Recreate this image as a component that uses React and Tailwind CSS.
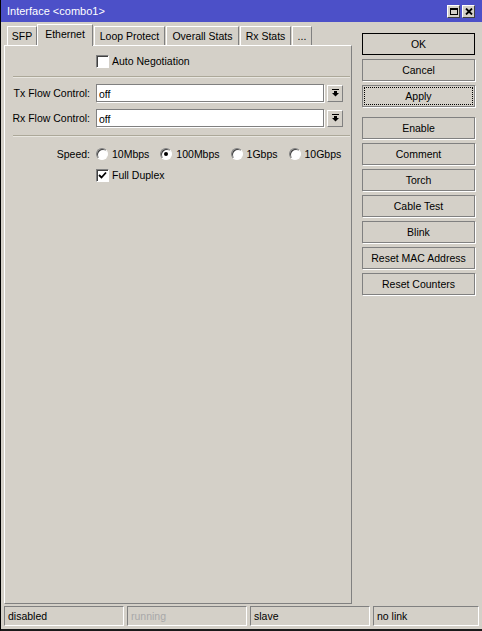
import React from 'react';

const font = { fontFamily: '"Liberation Sans", Arial, sans-serif' };

function Check({ checked }) {
  return (
    <div className="w-[13px] h-[13px] bg-white border border-[#808080] border-r-white border-b-white shadow-[inset_1px_1px_0_#404040] flex items-center justify-center">
      {checked && (
        <svg width="9" height="9" viewBox="0 0 9 9">
          <path d="M1 4 L3.5 6.5 L8 1.5" fill="none" stroke="#000" strokeWidth="1.8" />
        </svg>
      )}
    </div>
  );
}

function Radio({ checked }) {
  return (
    <div className="w-[12px] h-[12px] rounded-full bg-white border border-[#808080] border-r-white border-b-white shadow-[inset_1px_1px_0_#404040] flex items-center justify-center">
      {checked && <div className="w-[4px] h-[4px] rounded-full bg-black" />}
    </div>
  );
}

function DropArrow() {
  return (
    <svg width="7" height="8" viewBox="0 0 7 8">
      <rect x="0" y="0" width="7" height="1" fill="#000" />
      <rect x="2" y="2" width="3" height="2" fill="#000" />
      <polygon points="0,4 7,4 3.5,7.5" fill="#000" />
    </svg>
  );
}

function Select({ label, value }) {
  return (
    <div className="flex items-center h-[18px]">
      <div className="w-[86px] text-right pr-[1px] pt-px">{label}</div>
      <div className="ml-[5px] w-[228px] h-[18px] bg-white border border-[#808080] shadow-[1px_1px_0_#fff] pl-[2px] pt-px leading-[16px]">
        {value}
      </div>
      <div className="ml-[3px] w-[16px] h-[17px] border border-white border-r-[#808080] border-b-[#808080] flex items-center justify-center">
        <DropArrow />
      </div>
    </div>
  );
}

function Separator() {
  return <div className="ml-[8px] mr-[1px] h-[2px] border-t border-[#aca899] border-b border-b-[#e8e6e0]" />;
}

const tabs = [
  { name: 'SFP', w: 'w-[30px]' },
  { name: 'Ethernet', w: 'w-[56px]', active: true },
  { name: 'Loop Protect', w: 'w-[71px]' },
  { name: 'Overall Stats', w: 'w-[73px]' },
  { name: 'Rx Stats', w: 'w-[51px]' },
  { name: '...', w: 'w-[20px]' },
];

const speeds = [
  { label: '10Mbps', mr: 'mr-[11px]' },
  { label: '100Mbps', mr: 'mr-[11px]', checked: true },
  { label: '1Gbps', mr: 'mr-[11px]' },
  { label: '10Gbps', mr: '' },
];

function Btn({ children, kind }) {
  const base = 'w-[113px] h-[22px] flex items-center justify-center pt-px';
  if (kind === 'default') {
    return <div className={`${base} border border-black`}>{children}</div>;
  }
  if (kind === 'focus') {
    return (
      <div className={`${base} border border-[#808080] shadow-[1px_1px_0_#fff] outline-1 outline-dotted outline-black -outline-offset-3`}>
        {children}
      </div>
    );
  }
  return <div className={`${base} border border-[#808080] shadow-[1px_1px_0_#fff]`}>{children}</div>;
}

export default function App() {
  return (
    <div
      style={font}
      className="w-[482px] h-[631px] bg-[#d4d0c8] text-[10.5px] text-black flex flex-col border-l border-black border-b-2 border-b-[#1a1a1a] overflow-hidden"
    >
      {/* title bar */}
      <div className="h-[22px] -ml-px bg-[#4c50c8] flex items-center justify-between pl-[7px] pr-[7px]">
        <span className="text-white text-[11px] pt-px">Interface &lt;combo1&gt;</span>
        <div className="flex gap-[2px]">
          <div className="w-[13px] h-[13px] bg-[#d4d0c8] border border-white border-r-[#404040] border-b-[#404040] flex items-center justify-center">
            <div className="w-[8px] h-[7px] border border-black border-t-2" />
          </div>
          <div className="w-[13px] h-[13px] bg-[#d4d0c8] border border-white border-r-[#404040] border-b-[#404040] flex items-center justify-center">
            <svg width="8" height="7" viewBox="0 0 8 7">
              <path d="M1 0.5 L7 6.5 M7 0.5 L1 6.5" stroke="#000" strokeWidth="1.8" />
            </svg>
          </div>
        </div>
      </div>

      <div className="flex h-[582px]">
        {/* tabs + panel */}
        <div className="ml-[3px] w-[348px] flex flex-col">
          <div className="h-[23px] flex items-end pl-[2px]">
            {tabs.map((t) =>
              t.active ? (
                <div
                  key={t.name}
                  className={`${t.w} h-[22px] -mb-px relative z-10 bg-[#d4d0c8] border-t border-l border-white border-r border-r-[#808080] flex items-center justify-center pb-[1px]`}
                >
                  {t.name}
                </div>
              ) : (
                <div
                  key={t.name}
                  className={`${t.w} h-[19px] ml-px bg-[#d4d0c8] border-t border-l border-white border-r border-r-[#808080] flex items-center justify-center pt-px`}
                >
                  {t.name}
                </div>
              )
            )}
          </div>
          <div className="flex-1 border border-white border-r-[#808080] border-b-[#808080] flex flex-col">
            <div className="mt-[9px] flex items-center h-[13px] ml-[91px]">
              <Check />
              <span className="ml-[3px] pt-px">Auto Negotiation</span>
            </div>
            <div className="mt-[8px]">
              <Separator />
            </div>
            <div className="mt-[6px]">
              <Select label="Tx Flow Control:" value="off" />
            </div>
            <div className="mt-[7px]">
              <Select label="Rx Flow Control:" value="off" />
            </div>
            <div className="mt-[8px]">
              <Separator />
            </div>
            <div className="mt-[10px] flex items-center h-[14px]">
              <div className="w-[86px] text-right pr-[1px] pt-px">Speed:</div>
              <div className="ml-[5px] flex items-center">
                {speeds.map((s) => (
                  <div key={s.label} className={`flex items-center ${s.mr}`}>
                    <Radio checked={s.checked} />
                    <span className="ml-[4px] pt-px">{s.label}</span>
                  </div>
                ))}
              </div>
            </div>
            <div className="mt-[8px] flex items-center h-[13px] ml-[91px]">
              <Check checked />
              <span className="ml-[3px] pt-px">Full Duplex</span>
            </div>
          </div>
        </div>

        {/* button column */}
        <div className="ml-[10px] pt-[11px] flex flex-col">
          <Btn kind="default">OK</Btn>
          <div className="mt-[4px]"><Btn>Cancel</Btn></div>
          <div className="mt-[4px]"><Btn kind="focus">Apply</Btn></div>
          <div className="mt-[10px] flex flex-col gap-[4px]">
            {['Enable', 'Comment', 'Torch', 'Cable Test', 'Blink', 'Reset MAC Address', 'Reset Counters'].map((b) => (
              <Btn key={b}>{b}</Btn>
            ))}
          </div>
        </div>
      </div>

      {/* status bar */}
      <div className="flex pt-[2px] ml-[3px] gap-[3px]">
        {[
          { t: 'disabled', w: 'w-[120px]' },
          { t: 'running', w: 'w-[120px]', dim: true },
          { t: 'slave', w: 'w-[120px]' },
          { t: 'no link', w: 'w-[106px]' },
        ].map((c) => (
          <div
            key={c.t}
            className={`${c.w} h-[20px] border border-[#808080] border-r-white border-b-white pl-[3px] pt-px flex items-center ${c.dim ? 'text-[#a8a8a8]' : ''}`}
          >
            {c.t}
          </div>
        ))}
      </div>
    </div>
  );
}
